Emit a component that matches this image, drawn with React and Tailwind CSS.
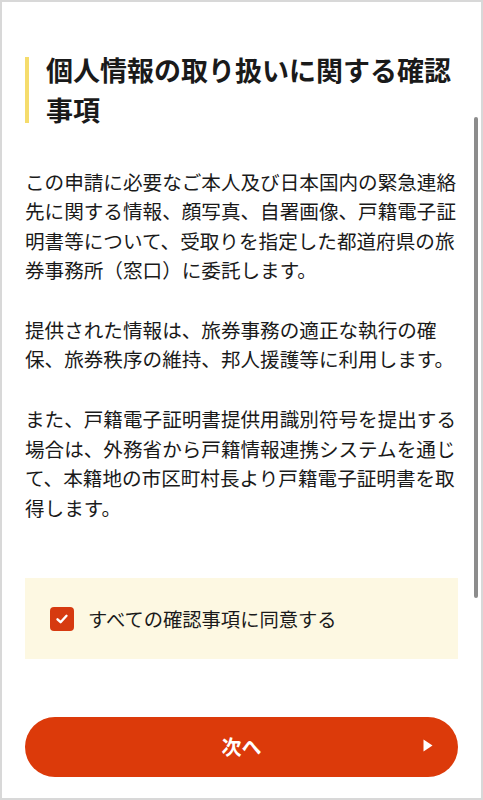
import React from "react";

const font = { fontFamily: '"Noto Sans CJK JP", "Noto Sans", sans-serif' };

export default function App() {
  return (
    <div
      className="relative w-[483px] h-[800px] overflow-hidden bg-white border-2 border-[#d8d8d8] text-[#1a1a1a]"
      style={font}
    >
      {/* overlay scrollbar */}
      <div className="absolute right-[3px] top-[115px] h-[481px] w-[4px] rounded-full bg-[#8c8c8c]" />

      <div className="px-[23px] pt-[48px]">
        {/* Heading */}
        <div className="flex">
          <div className="w-[4px] my-[7px] bg-[#f5dc6c] shrink-0" />
          <h1 className="ml-[17px] text-[27px] leading-[40px] font-bold">
            個人情報の取り扱いに関する確認事項
          </h1>
        </div>

        {/* Body */}
        <div className="mt-[37px] text-[19.6px] leading-[29.4px]">
          <p className="mb-[30px]">
            この申請に必要なご本人及び日本国内の緊急連絡先に関する情報、顔写真、自署画像、戸籍電子証明書等について、受取りを指定した都道府県の旅券事務所（窓口）に委託します。
          </p>
          <p className="mb-[31px]">
            提供された情報は、旅券事務の適正な執行の確保、旅券秩序の維持、邦人援護等に利用します。
          </p>
          <p>
            また、戸籍電子証明書提供用識別符号を提出する場合は、外務省から戸籍情報連携システムを通じて、本籍地の市区町村長より戸籍電子証明書を取得します。
          </p>
        </div>

        {/* Agreement */}
        <label className="mt-[56px] h-[81px] bg-[#fdf8e2] flex items-center px-[25px]">
          <span className="w-[24px] h-[24px] rounded-[4px] bg-[#d63a10] flex items-center justify-center shrink-0">
            <svg width="14" height="14" viewBox="0 0 14 14" fill="none">
              <path d="M2.5 7.3 L5.6 10.2 L11.5 3.8" stroke="white" strokeWidth="2.4" strokeLinecap="round" strokeLinejoin="round" />
            </svg>
          </span>
          <span className="ml-[14px] text-[19.3px] leading-[28px]">すべての確認事項に同意する</span>
        </label>

        {/* Next button */}
        <button className="relative mt-[58px] w-full h-[60px] rounded-full bg-[#dc3a0a] text-white text-[20px] font-bold flex items-center justify-center">
          次へ
          <svg className="absolute right-[25px] top-[22px]" width="10" height="13" viewBox="0 0 10 13">
            <path d="M0.5 0.5 L9.5 6.5 L0.5 12.5 Z" fill="white" />
          </svg>
        </button>
      </div>
    </div>
  );
}
